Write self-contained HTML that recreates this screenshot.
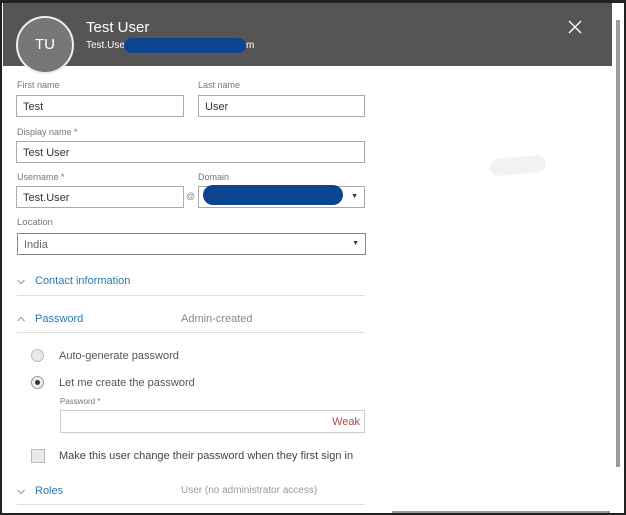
<!DOCTYPE html>
<html><head><style>
*{margin:0;padding:0;box-sizing:border-box}
body{width:626px;height:515px;background:#fff;position:relative;overflow:hidden;font-family:"Liberation Sans",sans-serif;color:#333}
.a{position:absolute}
.lbl{font-size:9px;color:#777}
.inp{position:absolute;border:1px solid #aaa;height:22px;font-size:11px;padding:5px 6px;color:#333}
.sec{font-size:11px;color:#2a7ab0}
.line{position:absolute;height:1px;background:#ddd;left:17px;width:348px}
.blob{position:absolute;background:#0b4590;border-radius:12px}
</style></head><body>
<div class="a" style="left:0;top:0;width:626px;height:515px;border:2px solid #222;border-top-width:3px"></div>
<div class="a" style="left:3px;top:3px;width:609px;height:63px;background:#555"></div>
<div class="a" style="left:16px;top:16px;width:58px;height:58px;border-radius:50%;background:#777;border:2px solid #eee;color:#fff;font-size:15px;text-align:center;line-height:54px">TU</div>
<div class="a" style="left:86px;top:19px;color:#fff;font-size:15px">Test User</div>
<div class="a" style="left:86px;top:40px;color:#fff;font-size:10px">Test.Use<span style="position:absolute;left:160px;top:0">m</span></div>
<div class="blob" style="left:124px;top:38px;width:122px;height:15px"></div>
<svg class="a" style="left:568px;top:20px" width="14" height="14"><path d="M1 1L13 13M13 1L1 13" stroke="#fff" stroke-width="1.4"/></svg>
<div class="a" style="left:616px;top:20px;width:4px;height:447px;background:#9a9a9a"></div>
<div class="a" style="left:490px;top:157px;width:56px;height:17px;background:#f2f2f2;border-radius:9px;transform:rotate(-5deg)"></div>

<div class="a lbl" style="left:17px;top:80px">First name</div>
<div class="a lbl" style="left:198px;top:80px">Last name</div>
<div class="inp" style="left:16px;top:95px;width:168px">Test</div>
<div class="inp" style="left:198px;top:95px;width:167px">User</div>
<div class="a lbl" style="left:17px;top:127px">Display name *</div>
<div class="inp" style="left:16px;top:141px;width:349px">Test User</div>
<div class="a lbl" style="left:17px;top:172px">Username *</div>
<div class="a lbl" style="left:198px;top:172px">Domain</div>
<div class="inp" style="left:16px;top:186px;width:168px">Test.User</div>
<div class="a" style="left:186px;top:191px;font-size:9px;color:#888">@</div>
<div class="inp" style="left:198px;top:186px;width:167px"><span style="position:absolute;right:6px;top:6px;font-size:7px">▼</span></div>
<div class="blob" style="left:203px;top:185px;width:140px;height:20px"></div>
<div class="a lbl" style="left:17px;top:217px;font-size:9.5px">Location</div>
<div class="inp" style="left:17px;top:233px;width:349px;border-color:#888;color:#666">India<span style="position:absolute;right:6px;top:6px;font-size:7px;color:#333">▼</span></div>

<svg class="a" style="left:17px;top:279px" width="8" height="6"><path d="M0.5 1L4 4.5L7.5 1" stroke="#999" fill="none"/></svg>
<div class="a sec" style="left:35px;top:275px">Contact information</div>
<div class="line" style="top:295px"></div>
<svg class="a" style="left:17px;top:316px" width="8" height="6"><path d="M0.5 5L4 1.5L7.5 5" stroke="#999" fill="none"/></svg>
<div class="a sec" style="left:35px;top:313px">Password</div>
<div class="a" style="left:181px;top:313px;font-size:11px;color:#888">Admin-created</div>
<div class="line" style="top:332px"></div>

<div class="a" style="left:31px;top:349px;width:13px;height:13px;border-radius:50%;border:1px solid #bbb;background:#e8e8e8"></div>
<div class="a" style="left:59px;top:350px;font-size:11px;color:#555">Auto-generate password</div>
<div class="a" style="left:31px;top:376px;width:13px;height:13px;border-radius:50%;border:1px solid #999;background:#eee"><div style="width:5px;height:5px;border-radius:50%;background:#333;margin:3px"></div></div>
<div class="a" style="left:59px;top:377px;font-size:11px;color:#555">Let me create the password</div>
<div class="a lbl" style="left:60px;top:397px;font-size:8px">Password *</div>
<div class="inp" style="left:60px;top:410px;width:305px;height:23px;border-color:#ccc"><span style="position:absolute;right:4px;top:5px;color:#b04a4a">Weak</span></div>
<div class="a" style="left:31px;top:449px;width:14px;height:14px;border:1px solid #bbb;background:#e8e8e8"></div>
<div class="a" style="left:59px;top:450px;font-size:11px;color:#444">Make this user change their password when they first sign in</div>
<svg class="a" style="left:17px;top:489px" width="8" height="6"><path d="M0.5 1L4 4.5L7.5 1" stroke="#999" fill="none"/></svg>
<div class="a sec" style="left:35px;top:485px">Roles</div>
<div class="a" style="left:181px;top:485px;font-size:10px;color:#999">User (no administrator access)</div>
<div class="line" style="top:504px"></div>
<div class="a" style="left:392px;top:511px;width:218px;height:2px;background:#999"></div>
</body></html>
